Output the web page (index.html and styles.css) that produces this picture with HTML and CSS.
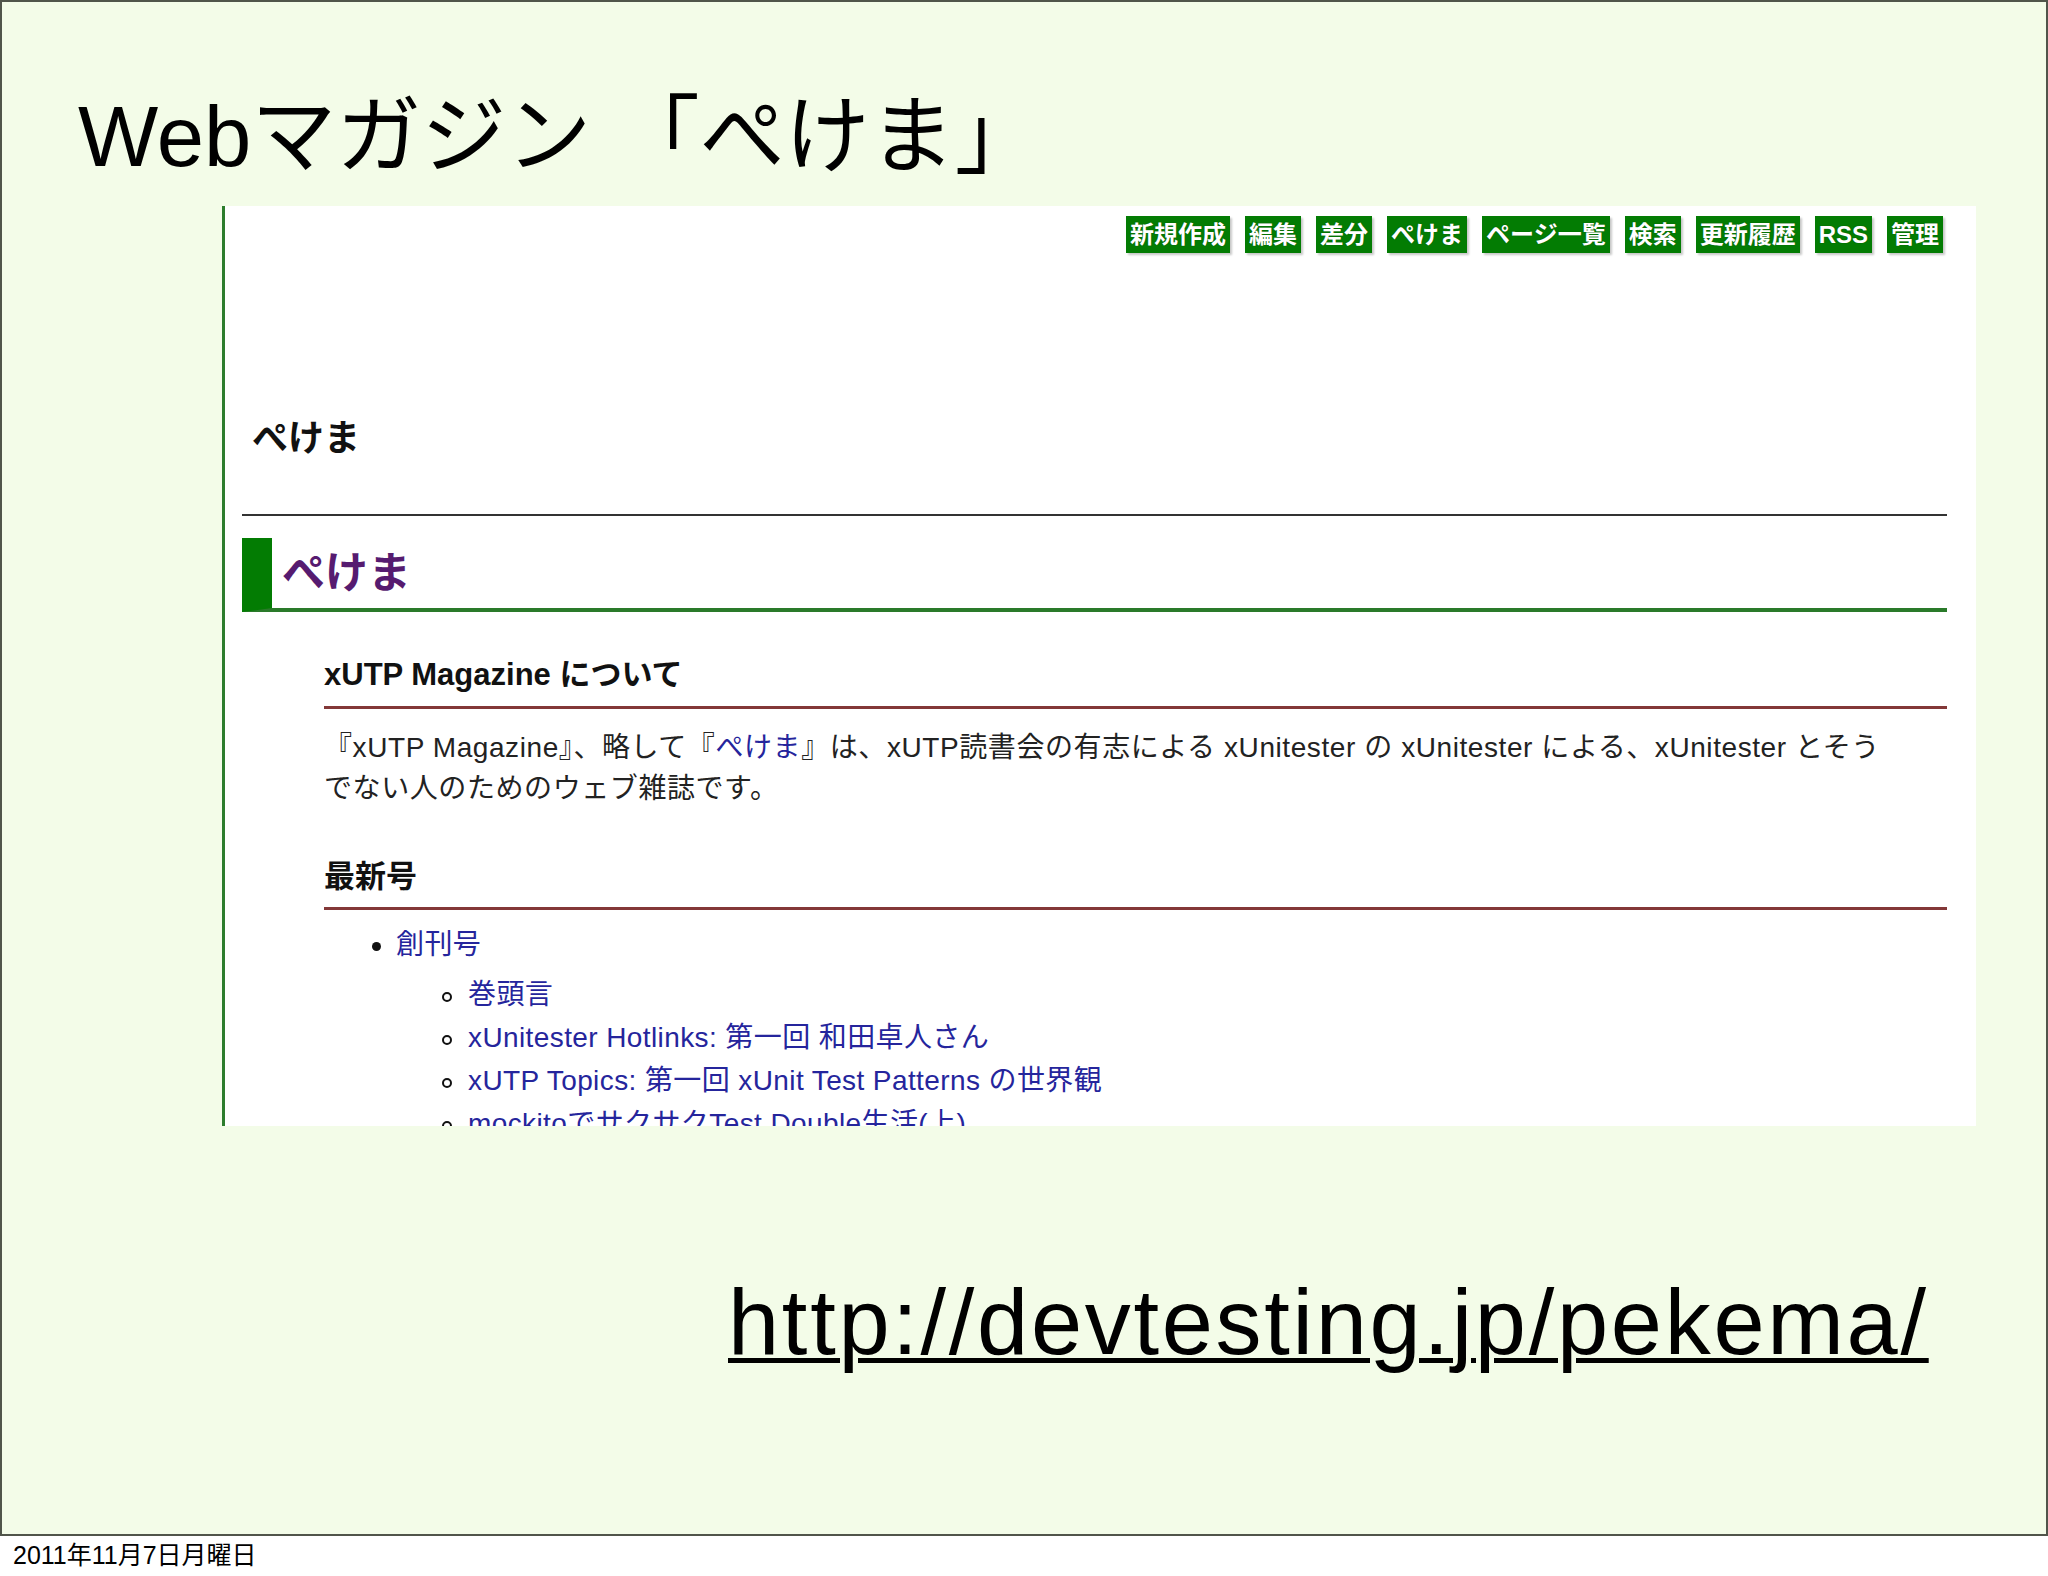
FILE: index.html
```html
<!DOCTYPE html>
<html lang="ja">
<head>
<meta charset="utf-8">
<title>Webマガジン 「ぺけま」</title>
<link rel="stylesheet" href="styles.css">
</head>
<body>
<div class="slide">
  <h1 class="slide-title">Webマガジン 「ぺけま」</h1>
  <div class="shot">
    <div class="toolbar">
      <span class="btn">新規作成</span>
      <span class="btn">編集</span>
      <span class="btn">差分</span>
      <span class="btn">ぺけま</span>
      <span class="btn">ページ一覧</span>
      <span class="btn">検索</span>
      <span class="btn">更新履歴</span>
      <span class="btn">RSS</span>
      <span class="btn">管理</span>
    </div>
    <div class="page-title">ぺけま</div>
    <div class="rule"></div>
    <h2 class="wiki-h2">ぺけま</h2>
    <h3 class="wiki-h3 first">xUTP Magazine について</h3>
    <p class="wiki-p">『xUTP Magazine』、略して『<span class="link">ぺけま</span>』は、xUTP読書会の有志による xUnitester の xUnitester による、xUnitester とそう<br>でない人のためのウェブ雑誌です。</p>
    <h3 class="wiki-h3 second">最新号</h3>
    <ul class="list1">
      <li class="item1"><span class="link">創刊号</span>
        <ul class="list2">
          <li class="item2"><span class="link">巻頭言</span></li>
          <li class="item2"><span class="link">xUnitester Hotlinks: 第一回 和田卓人さん</span></li>
          <li class="item2"><span class="link">xUTP Topics: 第一回 xUnit Test Patterns の世界観</span></li>
          <li class="item2"><span class="link">mockitoでサクサクTest Double生活(上)</span></li>
        </ul>
      </li>
    </ul>
  </div>
  <div class="url">http://devtesting.jp/pekema/</div>
</div>
<div class="date">2011年11月7日月曜日</div>
</body>
</html>
```

FILE: styles.css
```css
html, body {
  margin: 0;
  padding: 0;
}
body {
  width: 2048px;
  height: 1576px;
  background: #ffffff;
  font-family: "Liberation Sans", "Noto Sans CJK JP", sans-serif;
  color: #000;
  overflow: hidden;
}
.slide {
  box-sizing: border-box;
  height: 1536px;
  border: 2px solid #50554a;
  background: #f3fce8;
  overflow: hidden;
}
.slide-title {
  margin: 85px 0 0 76px;
  font-size: 85px;
  line-height: 100px;
  font-weight: 400;
  color: #000;
  white-space: nowrap;
}
.shot {
  margin: 19px 0 0 220px;
  width: 1754px;
  height: 920px;
  box-sizing: border-box;
  border-left: 3px solid #2d7d2d;
  background: #ffffff;
  overflow: hidden;
}
.toolbar {
  display: flex;
  justify-content: flex-end;
  gap: 15px;
  margin-top: 10px;
  padding-right: 33px;
}
.btn {
  display: block;
  height: 37px;
  line-height: 37px;
  padding: 0 4px;
  background: #037c03;
  color: #ffffff;
  font-size: 24px;
  font-weight: 700;
  box-shadow: 2px 2px 2px #c8c8c8;
  text-shadow: 0 0 1px #0b4a0b;
}
.page-title {
  margin: 166px 0 0 27px;
  font-size: 36px;
  line-height: 40px;
  font-weight: 700;
  color: #111;
}
.rule {
  margin: 55px 29px 0 17px;
  height: 2px;
  background: #333333;
}
.wiki-h2 {
  margin: 22px 29px 0 17px;
  height: 70px;
  line-height: 70px;
  border-left: 30px solid #037c03;
  border-bottom: 4px solid #2a7a2a;
  padding-left: 10px;
  font-size: 43px;
  font-weight: 700;
  color: #561b70;
}
.wiki-h3 {
  margin: 43px 29px 0 99px;
  font-size: 31px;
  line-height: 40px;
  font-weight: 700;
  color: #111;
  padding-bottom: 11px;
  border-bottom: 3px solid #833838;
}
.wiki-h3.second {
  margin-top: 48px;
  padding-bottom: 10px;
}
.wiki-p {
  margin: 18px 29px 0 99px;
  font-size: 28px;
  line-height: 41px;
  color: #222;
  white-space: nowrap;
  letter-spacing: 0.58px;
}
.link {
  color: #25259c;
}
.list1 {
  list-style: none;
  margin: 13px 0 0 171px;
  padding: 0;
}
.item1 {
  font-size: 28px;
  line-height: 43px;
  letter-spacing: 0.4px;
}
.item1::before {
  content: "";
  display: inline-block;
  width: 9px;
  height: 9px;
  border-radius: 50%;
  background: #111;
  margin: 0 15px 0 -24px;
  vertical-align: middle;
}
.list2 {
  list-style: none;
  margin: 7px 0 0 72px;
  padding: 0;
}
.item2 {
  font-size: 28px;
  line-height: 43px;
  white-space: nowrap;
  letter-spacing: 0.4px;
}
.item2::before {
  content: "";
  display: inline-block;
  box-sizing: border-box;
  width: 10px;
  height: 10px;
  border-radius: 50%;
  border: 2px solid #111;
  margin: 0 16px 0 -26px;
  vertical-align: middle;
}
.url {
  margin: 146px 0 0 726px;
  font-size: 92px;
  line-height: 100px;
  letter-spacing: 2.7px;
  color: #000;
  text-decoration: underline;
  text-decoration-thickness: 5px;
  text-underline-offset: 4px;
  white-space: nowrap;
}
.date {
  height: 40px;
  line-height: 38px;
  padding-left: 13px;
  font-size: 25px;
  color: #000;
}
```
